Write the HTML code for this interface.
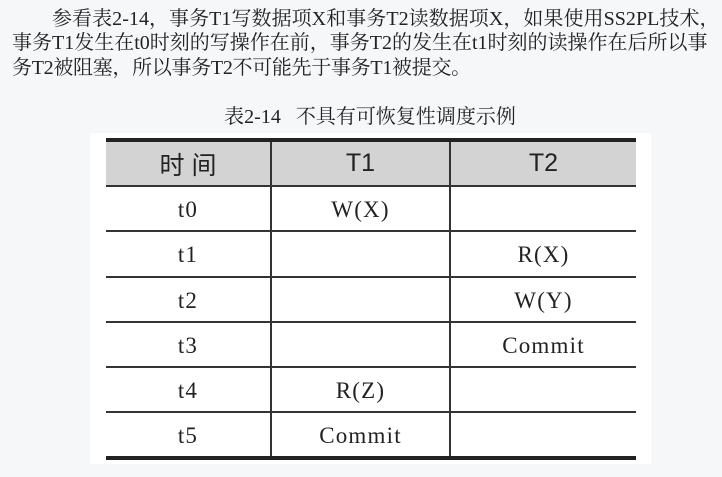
<!DOCTYPE html>
<html><head><meta charset="utf-8"><style>
html,body{margin:0;padding:0;background:#f6f7f9;width:722px;height:477px;overflow:hidden}
.l{position:absolute;white-space:nowrap;font-family:"Liberation Serif","Noto Serif CJK SC",serif;font-size:20px;color:#222;line-height:24px;letter-spacing:-0.3px}
.cap{position:absolute;left:0;width:740px;top:100px;text-align:center;font-family:"Liberation Serif","Noto Serif CJK SC",serif;font-size:20px;color:#222}
.w{position:absolute;left:90px;top:133px;width:561px;height:331px;background:#fff}
table{position:absolute;left:106px;top:138px;border-collapse:collapse;width:530px}
td{height:45.3px;border-bottom:2px solid #333;text-align:center;font-family:"Liberation Serif",serif;font-size:23px;letter-spacing:1.2px;color:#222;padding:3px 0 0 0;box-sizing:border-box}
td+td{border-left:2px solid #333}
tr.h td{background:#d3d3d3;font-family:"Liberation Sans","Noto Sans CJK SC",sans-serif;font-size:25px;letter-spacing:0;border-top:4px solid #222;height:46px;padding-top:0}
tr:last-child td{border-bottom:4px solid #222}
</style></head><body>
<div class="l" style="left:52px;top:7px;letter-spacing:0.05px">参看表2-14，事务T1写数据项X和事务T2读数据项X，如果使用SS2PL技术，</div>
<div class="l" style="left:12px;top:31px;letter-spacing:0px">事务T1发生在t0时刻的写操作在前，事务T2的发生在t1时刻的读操作在后所以事</div>
<div class="l" style="left:12px;top:56px">务T2被阻塞，所以事务T2不可能先于事务T1被提交。</div>
<div class="cap">表2-14&nbsp;&nbsp;&nbsp;不具有可恢复性调度示例</div>
<div class="w"></div>
<table>
<colgroup><col style="width:165px"><col style="width:179px"><col></colgroup>
<tr class="h"><td>时 间</td><td>T1</td><td>T2</td></tr>
<tr><td>t0</td><td>W(X)</td><td></td></tr>
<tr><td>t1</td><td></td><td>R(X)</td></tr>
<tr><td>t2</td><td></td><td>W(Y)</td></tr>
<tr><td>t3</td><td></td><td>Commit</td></tr>
<tr><td>t4</td><td>R(Z)</td><td></td></tr>
<tr><td>t5</td><td>Commit</td><td></td></tr>
</table>
</body></html>
